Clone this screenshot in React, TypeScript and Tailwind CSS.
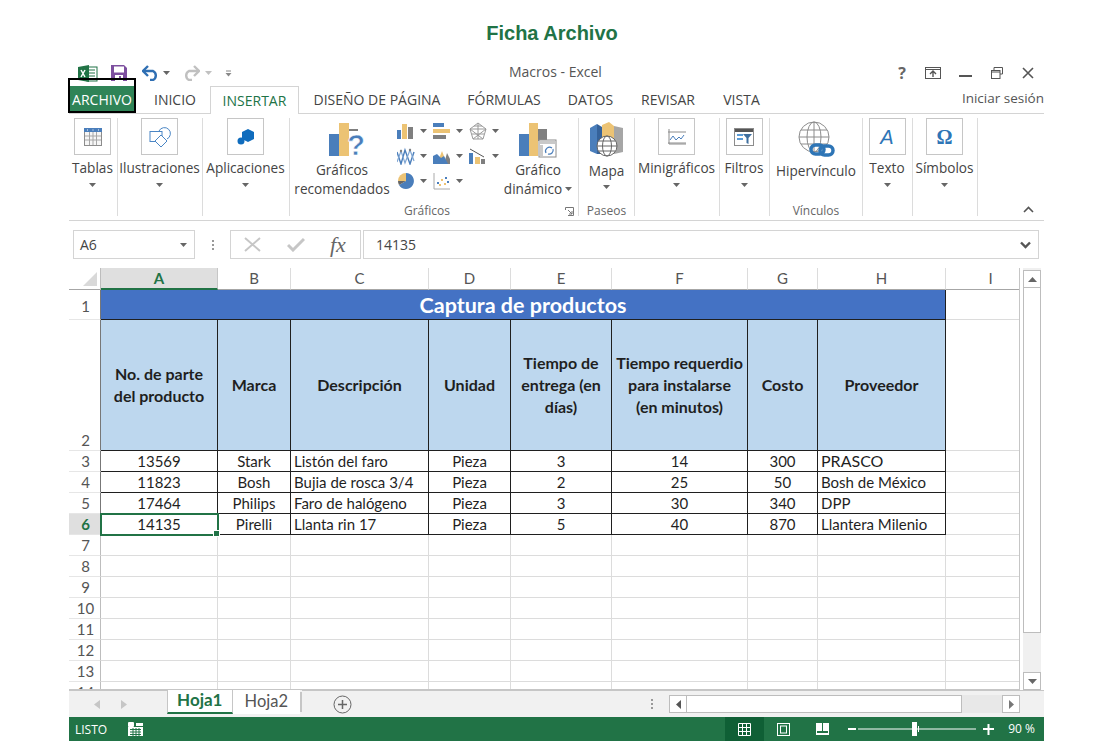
import React from 'react';

const BLUE = '#4a7ebb';
const YEL = '#ecc374';
const GRY = '#7f7f7f';

const tabs = [
  { label: 'INICIO', cls: 'w-[70px] ml-[5px]' },
  { label: 'INSERTAR', cls: 'w-[89px] text-[#217346] bg-white border border-b-0 border-[#d4d4d4] h-[28px] z-10' },
  { label: 'DISEÑO DE PÁGINA', cls: 'w-[156px]' },
  { label: 'FÓRMULAS', cls: 'w-[98px]' },
  { label: 'DATOS', cls: 'w-[75px]' },
  { label: 'REVISAR', cls: 'w-[80px]' },
  { label: 'VISTA', cls: 'w-[67px]' },
];

const products = [
  ['13569', 'Stark', 'Listón del faro', 'Pieza', '3', '14', '300', 'PRASCO'],
  ['11823', 'Bosh', 'Bujia de rosca 3/4', 'Pieza', '2', '25', '50', 'Bosh de México'],
  ['17464', 'Philips', 'Faro de halógeno', 'Pieza', '3', '30', '340', 'DPP'],
  ['14135', 'Pirelli', 'Llanta rin 17', 'Pieza', '5', '40', '870', 'Llantera Milenio'],
];

const headers = [
  ['No. de parte', 'del producto'],
  ['Marca'],
  ['Descripción'],
  ['Unidad'],
  ['Tiempo de', 'entrega (en', 'días)'],
  ['Tiempo requerdio', 'para instalarse', '(en minutos)'],
  ['Costo'],
  ['Proveedor'],
];

const Caret = () => (
  <svg width="7" height="4" viewBox="0 0 7 4" className="shrink-0"><path d="M0 0h7L3.5 4z" fill="#666" /></svg>
);

const Box = ({ children }: { children: React.ReactNode }) => (
  <div className="w-[37px] h-[37px] border border-[#c6c6c6] flex items-center justify-center">{children}</div>
);

// one ribbon button with a framed icon, a label and the small arrow under it
function BoxGroup({ width, label, children }: { width: string; label: string; children: React.ReactNode }) {
  return (
    <div className={`${width} h-[98px] pr-[1px] border-r border-[#dcdcdc] flex flex-col items-center shrink-0`}>
      <Box>{children}</Box>
      <div className="mt-[3px] text-[13.6px] leading-[20px] whitespace-nowrap">{label}</div>
      <div className="mt-[5px]"><Caret /></div>
    </div>
  );
}

const GroupLabel = ({ children }: { children: React.ReactNode }) => (
  <div className="mt-auto -mb-[2px] h-[14px] text-[12px] leading-[14px] text-[#666]">{children}</div>
);

const SmallChart = ({ children, w = 18 }: { children: React.ReactNode; w?: number }) => (
  <div className="flex items-center gap-[5px] h-[25px] w-[36px]">
    <svg width={w} height="18" viewBox="0 0 18 18" className="shrink-0">{children}</svg>
    <Caret />
  </div>
);

function SmallCharts() {
  return (
    <div className="grid grid-cols-[36px_36px_36px] w-[108px] h-[76px]">
      <SmallChart><rect x="0" y="8" width="4" height="9" fill={BLUE} /><rect x="5" y="2" width="5" height="15" fill={YEL} /><rect x="11" y="5" width="5" height="12" fill={GRY} /></SmallChart>
      <SmallChart><rect x="0" y="1" width="11" height="4" fill={BLUE} /><rect x="0" y="7" width="17" height="4" fill={YEL} /><rect x="0" y="13" width="13" height="4" fill={GRY} /></SmallChart>
      <SmallChart><path d="M9 1l8 6-3 10H4L1 7z M9 1v16 M1 7l13 10 M17 7L4 17 M1 7h16 M5 4l8 0 M3 12h12" fill="none" stroke="#9a9a9a" strokeWidth="1" /></SmallChart>
      <SmallChart><path d="M0 5l4 12 4-14 5 14 4-12" fill="none" stroke={BLUE} strokeWidth="1.4" /><path d="M0 15l4-11 4 12 5-13 4 11" fill="none" stroke="#7fa6d3" strokeWidth="1.2" /><circle cx="4" cy="4" r="1.2" fill={GRY} /><circle cx="13" cy="3" r="1.2" fill={GRY} /></SmallChart>
      <SmallChart><path d="M11 17l3-11 3 6v5z" fill={GRY} /><path d="M4 17l5-13 5 13z" fill={YEL} /><path d="M0 17V9l4-2 4 4 3-2 4 8z" fill={BLUE} /></SmallChart>
      <SmallChart><rect x="0" y="6" width="4" height="11" fill={BLUE} /><rect x="6" y="10" width="5" height="7" fill={YEL} /><rect x="12" y="12" width="4" height="5" fill={GRY} /><path d="M1 2l7 4 7 4" fill="none" stroke="#555" strokeWidth="1" /></SmallChart>
      <SmallChart><path d="M9 9V1a8 8 0 0 0-8 8z" fill={YEL} /><path d="M9 1a8 8 0 1 1-7 12l7-4z" fill={BLUE} /><path d="M1 9h8l-7 4a8 8 0 0 1-1-4z" fill="#666" /></SmallChart>
      <SmallChart><path d="M1 1v16h16" fill="none" stroke="#aaa" strokeWidth="1" /><g fill={BLUE}><rect x="4" y="10" width="2" height="2" /><rect x="12" y="5" width="2" height="2" /><rect x="14" y="9" width="2" height="2" /></g><g fill={YEL}><rect x="6" y="12" width="2" height="2" /><rect x="8" y="7" width="2" height="2" /><rect x="11" y="11" width="2" height="2" /></g></SmallChart>
    </div>
  );
}

function Ribbon() {
  return (
    <div className="h-[107px] pt-[4px] border-b border-[#d4d4d4] flex text-[#444] relative">
      <BoxGroup width="w-[49px]" label="Tablas">
        <svg width="20" height="20" viewBox="0 0 20 20"><rect x="1.5" y="1.5" width="17" height="17" fill="#f6f6f6" stroke="#8c8c8c" /><rect x="1" y="1" width="18" height="4" fill={BLUE} /><path d="M2 9h16M2 13h16M6.500 5v13M10 5v13M13.500 5v13" stroke="#a6a6a6" /><path d="M4 3h1M9.500 3h1M15 3h1" stroke="#fff" /></svg>
      </BoxGroup>
      <BoxGroup width="w-[85px]" label="Ilustraciones">
        <svg width="22" height="22" viewBox="0 0 22 22" fill="none" stroke="#4a86c5"><rect x="1" y="5.500" width="12" height="10" /><path d="M10 5a6 6 0 1 1 8 8" /><path d="M12 9l6 6-6 6-6-6z" fill="#fff" /></svg>
      </BoxGroup>
      <BoxGroup width="w-[87px]" label="Aplicaciones">
        <svg width="18" height="18" viewBox="0 0 18 18"><path d="M11 1l6 3v7l-6 3-6-3V4z" fill="#0f6cbd" /><circle cx="4" cy="13" r="3.500" fill="#0f6cbd" /></svg>
      </BoxGroup>

      {/* Gráficos */}
      <div className="w-[289px] h-[98px] border-r border-[#dcdcdc] flex flex-col shrink-0">
        <div className="flex h-[86px] shrink-0">
          <div className="w-[107px] flex flex-col items-center">
            <svg width="38" height="40" viewBox="0 0 38 40" className="mt-[4px] ml-[9px] -mb-[4px]">
              <rect x="0" y="12" width="10" height="22" fill={BLUE} />
              <rect x="10" y="1" width="10" height="33" fill={YEL} />
              <rect x="20" y="7" width="9" height="2" fill={GRY} />
              <text x="27" y="33" fontSize="29" fontWeight="700" textAnchor="middle" fill="#4a7ebb" stroke="#fff" strokeWidth="0.6" fontFamily="'Liberation Sans',sans-serif">?</text>
            </svg>
            <div className="text-[13.6px] leading-[19px] text-center mt-[2px] -ml-[3px]">Gráficos<br />recomendados</div>
          </div>
          <SmallCharts />
          <div className="w-[66px] flex flex-col items-center">
            <svg width="38" height="36" viewBox="0 0 38 36" className="mt-[4px]">
              <rect x="0" y="12" width="10" height="22" fill={BLUE} />
              <rect x="10" y="1" width="9" height="33" fill={YEL} />
              <rect x="19" y="7" width="9" height="12" fill={GRY} />
              <rect x="20" y="18" width="17" height="17" fill="#fff" stroke="#8c8c8c" />
              <path d="M21 19h15v3H21zM21 23h3v11h-3z" fill="#c9c9c9" />
              <path d="M27 31a4 4 0 0 1 6-5M34 27a4 4 0 0 1-5 5" fill="none" stroke={BLUE} strokeWidth="1.2" />
            </svg>
            <div className="text-[13.6px] leading-[19px] text-center mt-[2px]">Gráfico<br /><span className="inline-flex items-center gap-[3px]">dinámico <Caret /></span></div>
          </div>
        </div>
        <div className="flex h-[14px] shrink-0 items-center">
          <div className="w-[270px] pl-[4px] text-center text-[12px] leading-[14px] text-[#666]">Gráficos</div>
          <svg width="9" height="9" viewBox="0 0 9 9" className="ml-[5px]" fill="none" stroke="#777"><path d="M.5 3V.5H8.500V8.500H3" /><path d="M3 3l4 4M7 4v3H4" /></svg>
        </div>
      </div>

      {/* Paseos */}
      <div className="w-[56px] h-[98px] border-r border-[#dcdcdc] flex flex-col items-center shrink-0">
        <svg width="34" height="36" viewBox="0 0 34 36" className="mt-[3px]">
          <path d="M0 7l7-4v30l-7-3z" fill={BLUE} /><path d="M7 3l5 3v27l-5-0z" fill="#35629a" />
          <path d="M12 4l7-3 5 4v28H12z" fill={YEL} /><path d="M24 5l9 2v24l-9 2z" fill="#a6a6a6" />
          <circle cx="17" cy="25" r="10" fill="#fff" stroke="#666" /><ellipse cx="17" cy="25" rx="4.500" ry="10" fill="none" stroke="#666" /><path d="M7 25h20M9 20h16M9 30h16" stroke="#666" />
        </svg>
        <div className="text-[13.6px] leading-[19px] mt-[4px]">Mapa</div>
        <div className="mt-[5px]"><Caret /></div>
        <GroupLabel>Paseos</GroupLabel>
      </div>

      <BoxGroup width="w-[85px]" label="Minigráficos">
        <svg width="20" height="18" viewBox="0 0 20 18" fill="none"><path d="M2 1v15h17M1 4h18M1 15h18" stroke="#8c8c8c" /><path d="M3 12l3-4 3 4 3-3 2 2 3-4" stroke="#4a7ebb" /></svg>
      </BoxGroup>
      <BoxGroup width="w-[50px]" label="Filtros">
        <svg width="20" height="18" viewBox="0 0 20 18"><rect x=".5" y=".5" width="19" height="17" fill="#fff" stroke="#8c8c8c" /><rect x="1" y="1" width="18" height="3" fill="#555" /><path d="M3 6h6v2H3zM3 10h6v2H3z" fill="#5b9bd5" /><path d="M9 6h9l-3.500 4v6l-2-1v-5z" fill="#3f6f9e" /></svg>
      </BoxGroup>

      {/* Vínculos */}
      <div className="w-[93px] h-[98px] border-r border-[#dcdcdc] flex flex-col items-center shrink-0">
        <svg width="38" height="38" viewBox="0 0 38 38" className="mt-[3px]">
          <g fill="none" stroke="#8c8c8c"><circle cx="17" cy="16" r="15" /><ellipse cx="17" cy="16" rx="7" ry="15" /><path d="M2 16h30M4 9h26M4 23h26M17 1v30" /></g>
          <g fill="none" stroke="#2e75b6" strokeWidth="3.500"><rect x="14" y="24" width="13" height="9" rx="4.500" /><rect x="23" y="25" width="13" height="9" rx="4.500" /></g>
        </svg>
        <div className="text-[13.6px] leading-[19px] mt-[2px]">Hipervínculo</div>
        <GroupLabel>Vínculos</GroupLabel>
      </div>

      <BoxGroup width="w-[50px]" label="Texto">
        <span className="text-[#2e75b6] italic text-[20px] leading-none font-['Liberation_Sans',sans-serif]">A</span>
      </BoxGroup>
      <BoxGroup width="w-[65px]" label="Símbolos">
        <span className="text-[#2e75b6] font-bold text-[20px] leading-none font-['Liberation_Serif',serif]">Ω</span>
      </BoxGroup>

      {/* collapse arrow */}
      <div className="flex-1 flex justify-end items-end pr-[10px] pb-[3px] h-[98px]">
        <svg width="11" height="7" viewBox="0 0 11 7" fill="none" stroke="#555" strokeWidth="1.600"><path d="M1 6l4.500-4.500L10 6" /></svg>
      </div>
    </div>
  );
}

function TitleBar() {
  return (
    <div className="h-[26px] flex items-center relative text-[#555]">
      <svg width="20" height="17" viewBox="0 0 20 17" className="ml-[9px] shrink-0">
        <rect x="9" y="2" width="10" height="14" fill="#fff" stroke="#217346" />
        <path d="M11 5h6M11 8h6M11 11h6M11 14h6" stroke="#217346" />
        <path d="M0 2l11-2v17L0 15z" fill="#217346" />
        <path d="M3 5l4 7M7 5l-4 7" stroke="#fff" strokeWidth="1.500" />
      </svg>
      <svg width="16" height="16" viewBox="0 0 16 16" className="ml-[13px] shrink-0">
        <path d="M0 0h13l3 3v13H0z" fill="#7d4f9f" /><rect x="3" y="1.500" width="10" height="6" fill="#fff" /><rect x="4" y="10" width="8" height="6" fill="#fff" /><rect x="8" y="11" width="2" height="4" fill="#7d4f9f" />
      </svg>
      <svg width="18" height="16" viewBox="0 0 18 16" fill="none" className="ml-[15px] shrink-0">
        <path d="M1 6h10a5 5 0 0 1 0 9H8" stroke="#2f6fb3" strokeWidth="2.400" /><path d="M6 1L1 6l5 5" stroke="#2f6fb3" strokeWidth="2.400" />
      </svg>
      <span className="ml-[3px]"><Caret /></span>
      <svg width="18" height="16" viewBox="0 0 18 16" fill="none" className="ml-[12px] shrink-0">
        <path d="M17 6H7a5 5 0 0 0 0 9h3" stroke="#c0c0c0" strokeWidth="2.400" /><path d="M12 1l5 5-5 5" stroke="#c0c0c0" strokeWidth="2.400" />
      </svg>
      <span className="ml-[5px] opacity-40"><Caret /></span>
      <svg width="7" height="7" viewBox="0 0 7 7" className="ml-[13px] shrink-0"><path d="M1 1h5" stroke="#888" /><path d="M.5 3h6L3.500 6.500z" fill="#888" /></svg>

      <div className="absolute left-[440px] top-[2px] text-[14px] leading-[20px]">Macros - Excel</div>

      <div className="ml-auto flex items-center h-full">
        <span className="font-bold text-[16px] text-[#666] mr-[19px]">?</span>
        <svg width="16" height="12" viewBox="0 0 16 12" fill="none" stroke="#555" className="mr-[18px]"><rect x=".5" y=".5" width="15" height="11" /><path d="M1 2.500h14" /><path d="M8 10V4M5 7l3-3 3 3" strokeWidth="1.400" /></svg>
        <svg width="13" height="2" viewBox="0 0 13 2" className="mt-[6px] mr-[19px]"><rect width="13" height="2" fill="#555" /></svg>
        <svg width="12" height="12" viewBox="0 0 12 12" fill="none" stroke="#555" className="mr-[19px]"><path d="M3 3V.5h8.500V7H9" /><rect x=".5" y="3.500" width="8.500" height="8" /><path d="M1 5h8" /></svg>
        <svg width="12" height="12" viewBox="0 0 12 12" fill="none" stroke="#555" strokeWidth="1.600" className="mr-[10px]"><path d="M1 1l10 10M11 1L1 11" /></svg>
      </div>
    </div>
  );
}

function TabBar() {
  return (
    <div className="h-[28px] flex border-b border-[#d4d4d4] text-[#444] text-[14px] relative">
      <div className="w-[66px] h-[27px] bg-[#2f8457] text-white flex items-center justify-center relative text-[14px]">
        ARCHIVO
        <div className="absolute left-[-1px] top-[-8px] w-[68px] h-[35px] border-2 border-black" />
      </div>
      {tabs.map((t) => (
        <div key={t.label} className={`${t.cls} flex items-center justify-center whitespace-nowrap`}>{t.label}</div>
      ))}
      <div className="ml-auto text-[13.5px] leading-[24px] text-[#555] whitespace-nowrap">Iniciar sesión</div>
    </div>
  );
}

function FormulaBar() {
  return (
    <div className="h-[47px] pt-[9px] pl-[4px] flex text-[#444]">
      <div className="w-[122px] h-[29px] border border-[#d4d4d4] flex items-center justify-between pl-[6px] pr-[7px] text-[14px]">
        A6 <Caret />
      </div>
      <div className="w-[35px] h-[29px] flex flex-col items-center justify-center gap-[2px]">
        <i className="w-[2px] h-[2px] bg-[#999]" /><i className="w-[2px] h-[2px] bg-[#999]" /><i className="w-[2px] h-[2px] bg-[#999]" />
      </div>
      <div className="w-[131px] h-[29px] border border-[#d4d4d4] flex items-center pl-[13px]">
        <svg width="17" height="15" viewBox="0 0 17 15" stroke="#c6c6c6" strokeWidth="2" fill="none"><path d="M1 1l15 13M16 1L1 14" /></svg>
        <svg width="18" height="15" viewBox="0 0 18 15" stroke="#c6c6c6" strokeWidth="3" fill="none" className="ml-[26px]"><path d="M1 8l5 5L17 2" /></svg>
        <span className="ml-[25px] text-[#666] italic text-[22px] leading-none font-['Liberation_Serif',serif]">fx</span>
      </div>
      <div className="w-[676px] h-[29px] ml-[2px] border border-[#d4d4d4] flex items-center justify-between pl-[12px] pr-[7px] text-[14px]">
        14135
        <svg width="11" height="8" viewBox="0 0 11 8" fill="none" stroke="#555" strokeWidth="2.400"><path d="M1 1.500l4.500 4.500L10 1.500" /></svg>
      </div>
    </div>
  );
}

const ColHead = ({ label, active, cls = '' }: { label: string; active?: boolean; cls?: string }) => (
  <div className={`${cls} ${active
    ? 'bg-[#dfdfdf] text-[#217346] font-bold border-b-2 border-[#217346] border-r border-r-[#c6c6c6]'
    : 'border-b border-[#a6a6a6] border-r border-r-[#dcdcdc] text-[#555]'} flex items-center justify-center`}>{label}</div>
);

const RowHead = ({ n, cls = '', dark, active }: { n: number; cls?: string; dark?: boolean; active?: boolean }) => (
  <div className={`${active ? 'bg-[#dfdfdf] text-[#217346] font-bold' : 'text-[#555]'} ${dark ? 'border-r-[#777]' : 'border-r-[#bdbdbd]'} ${cls} border-r border-b border-b-[#e6e6e6] flex justify-center pl-[2px]`}>{n}</div>
);

const EmptyCell = () => <div className="border-r border-b border-[#dcdcdc]" />;

function Sheet() {
  return (
    <div className="w-[951px] h-[422px] overflow-hidden grid grid-cols-[32px_117px_73px_138px_82px_101px_136px_70px_128px_74px] grid-rows-[22px_30px_131px_repeat(11,21px)_21px] font-['Lato',sans-serif] text-[15px] text-[#1f1f1f] border-r border-[#c6c6c6] border-b">
      {/* column letters */}
      <div className="border-b border-[#a6a6a6] border-r border-r-[#bdbdbd] flex items-end justify-end pr-[3px] pb-[3px]">
        <svg width="14" height="14" viewBox="0 0 14 14"><path d="M14 0v14H0z" fill="#d9d9d9" /></svg>
      </div>
      {['A', 'B', 'C', 'D', 'E', 'F', 'G', 'H'].map((c, i) => (
        <ColHead key={c} label={c} active={i === 0} />
      ))}
      <ColHead label="I" cls="pl-[16px]" />

      {/* title row */}
      <RowHead n={1} dark cls="items-center pt-[3px]" />
      <div className="col-span-8 bg-[#4472c4] text-white font-bold text-[21.5px] pt-[1px] flex items-center justify-center border-r border-b border-[#1f1f1f]">Captura de productos</div>
      <EmptyCell />

      {/* header row */}
      <RowHead n={2} dark cls="items-end leading-[19px]" />
      {headers.map((h) => (
        <div key={h[0]} className="bg-[#bdd7ee] font-bold text-[16px] leading-[22px] pb-[1px] text-center flex flex-col items-center justify-center border-r border-b border-[#1f1f1f] whitespace-nowrap">
          {h.map((line) => <span key={line}>{line}</span>)}
        </div>
      ))}
      <EmptyCell />

      {/* data */}
      {products.map((row, r) => (
        <React.Fragment key={row[0]}>
          <RowHead n={r + 3} dark active={r === 3} cls="items-center" />
          {row.map((v, c) => (
            <div
              key={c}
              className={`${c === 2 || c === 7 ? 'justify-start pl-[3px]' : 'justify-center'} ${r === 0 && c === 7 ? 'text-[16px]' : ''} ${r === 3 && c === 0 ? 'relative z-10 outline-2 -outline-offset-1 outline-[#217346]' : ''} flex items-center border-r border-b border-[#1f1f1f] whitespace-nowrap`}
            >
              {v}
              {r === 3 && c === 0 && (
                <span className="absolute right-[-3px] bottom-[-3px] w-[5px] h-[5px] bg-[#217346] border border-white box-content" />
              )}
            </div>
          ))}
          <EmptyCell />
        </React.Fragment>
      ))}

      {/* empty rows */}
      {[7, 8, 9, 10, 11, 12, 13, 14].map((n) => (
        <React.Fragment key={n}>
          <RowHead n={n} cls="items-center" />
          {[0, 1, 2, 3, 4, 5, 6, 7, 8].map((c) => <EmptyCell key={c} />)}
        </React.Fragment>
      ))}
    </div>
  );
}

function VScroll() {
  return (
    <div className="w-[18px] ml-[3px] pt-[2px] h-[422px] flex flex-col bg-[#f0f0f0]">
      <div className="h-[18px] bg-white border border-[#bdbdbd] flex items-center justify-center">
        <svg width="9" height="5" viewBox="0 0 9 5"><path d="M0 5h9L4.500 0z" fill="#666" /></svg>
      </div>
      <div className="h-[345px] bg-white border-x border-b border-[#bdbdbd]" />
      <div className="flex-1" />
      <div className="h-[18px] bg-white border border-[#bdbdbd] flex items-center justify-center">
        <svg width="9" height="5" viewBox="0 0 9 5"><path d="M0 0h9L4.500 5z" fill="#666" /></svg>
      </div>
    </div>
  );
}

function SheetTabs() {
  return (
    <div className="h-[27px] bg-[#f1f1f1] flex text-[15px] font-['Lato',sans-serif]">
      <div className="w-[98px] flex items-center pl-[25px] gap-[21px] border-t border-[#c6c6c6]">
        <svg width="6" height="9" viewBox="0 0 6 9"><path d="M6 0v9L0 4.500z" fill="#c6c6c6" /></svg>
        <svg width="6" height="9" viewBox="0 0 6 9"><path d="M0 0v9l6-4.500z" fill="#c6c6c6" /></svg>
      </div>
      <div className="w-[67px] h-[24px] pb-[2px] bg-white border-x border-[#c6c6c6] border-b-2 border-b-[#217346] text-[#217346] font-bold text-[17px] leading-[20px] flex items-center justify-center">Hoja1</div>
      <div className="w-[67px] h-[24px] pb-[2px] bg-white text-[#555] text-[16.5px] leading-[20px] flex items-center justify-center">
        Hoja2
      </div>
      <div className="h-[20px] mt-[2px] border-l-2 border-[#c6c6c6]" />
      <div className="w-[83px] flex items-center justify-center border-t border-[#c6c6c6]">
        <svg width="19" height="19" viewBox="0 0 19 19" fill="none" stroke="#666"><circle cx="9.500" cy="9.500" r="8.500" /><path d="M9.500 5v9M5 9.500h9" strokeWidth="1.500" /></svg>
      </div>
      <div className="flex-1 flex items-center border-t border-[#c6c6c6] pl-[267px]">
        <div className="flex flex-col gap-[2px] w-[18px]">
          <i className="w-[2px] h-[2px] bg-[#999]" /><i className="w-[2px] h-[2px] bg-[#999]" /><i className="w-[2px] h-[2px] bg-[#999]" />
        </div>
        <div className="w-[351px] h-[18px] flex bg-[#e8e8e8]">
          <div className="w-[18px] bg-white border border-[#bdbdbd] flex items-center justify-center">
            <svg width="5" height="9" viewBox="0 0 5 9"><path d="M5 0v9L0 4.500z" fill="#555" /></svg>
          </div>
          <div className="w-[275px] bg-white border-y border-r border-[#bdbdbd]" />
          <div className="flex-1" />
          <div className="w-[18px] bg-white border border-[#bdbdbd] flex items-center justify-center">
            <svg width="5" height="9" viewBox="0 0 5 9"><path d="M0 0v9l5-4.500z" fill="#777" /></svg>
          </div>
        </div>
        <div className="w-[24px]" />
      </div>
    </div>
  );
}

function StatusBar() {
  return (
    <div className="h-[24px] bg-[#217346] text-white flex items-center text-[12px]">
      <span className="ml-[6px] pt-[1px]">LISTO</span>
      <svg width="15" height="14" viewBox="0 0 15 14" className="ml-[21px]">
        <rect x="0" y="0" width="6" height="5" rx="1" fill="#fff" /><rect x="8" y="1" width="7" height="3" fill="#fff" />
        <rect x="0" y="5" width="15" height="9" fill="#fff" /><path d="M2 7.500h11M2 10h11M2 12.500h11M5 6v8M8 6v8M11 6v8" stroke="#217346" />
      </svg>
      <div className="ml-auto flex items-center h-full">
        <div className="w-[39px] h-full bg-[#0f5f35] flex items-center justify-center">
          <svg width="13" height="13" viewBox="0 0 13 13" fill="none" stroke="#fff"><path d="M.5.5h12v12H.5zM4.500.5v12M8.500.5v12M.5 4.500h12M.5 8.500h12" /></svg>
        </div>
        <div className="w-[39px] flex justify-center">
          <svg width="13" height="13" viewBox="0 0 13 13" fill="none" stroke="#fff"><rect x=".5" y=".5" width="12" height="12" /><rect x="3.500" y="3" width="6" height="7" /></svg>
        </div>
        <div className="w-[39px] flex justify-center">
          <svg width="13" height="12" viewBox="0 0 13 12"><rect width="13" height="12" fill="#fff" /><rect x="6" y="0" width="1" height="8" fill="#217346" /><rect x="1" y="8" width="11" height="2" fill="#217346" /></svg>
        </div>
        <svg width="150" height="16" viewBox="0 0 150 16" className="ml-[2px]">
          <path d="M4 8h8M139 8h11M144.500 3v11" stroke="#fff" strokeWidth="2" fill="none" />
          <path d="M14 8h118" stroke="#fff" />
          <rect x="68" y="1" width="5" height="14" fill="#fff" />
          <path d="M74.500 5v6" stroke="#fff" />
        </svg>
        <span className="w-[50px] text-right pr-[9px] text-[12px]">90 %</span>
      </div>
    </div>
  );
}

export default function App() {
  return (
    <div className="w-[1100px] h-[753px] bg-white overflow-hidden font-['Open_Sans',sans-serif]">
      <div className="h-[60px] pt-[21px] pl-[4px] text-center font-['Liberation_Sans',sans-serif] font-bold text-[20px] leading-[24px] text-[#217346]">Ficha Archivo</div>
      <div className="ml-[69px] w-[975px]">
        <TitleBar />
        <TabBar />
        <Ribbon />
        <FormulaBar />
        <div className="flex">
          <Sheet />
          <VScroll />
        </div>
        <SheetTabs />
        <StatusBar />
      </div>
    </div>
  );
}
